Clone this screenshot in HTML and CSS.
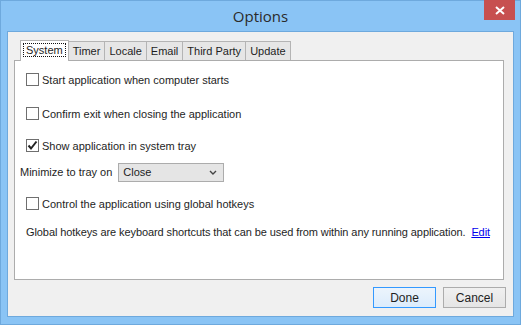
FILE: index.html
```html
<!DOCTYPE html>
<html lang="en">
<head>
  <meta charset="UTF-8">
  <title>Options</title>
  <link rel="stylesheet" href="styles.css">
</head>
<body>

<div class="window">
  <div class="titlebar">
    <span class="title">Options</span>
    <span class="close">
      <svg width="10" height="9" viewBox="0 0 10 9"><path d="M1 1 L9 8 M9 1 L1 8" stroke="#fff" stroke-width="2"/></svg>
    </span>
  </div>

  <div class="client">
    <div class="tabs">
      <div class="tab active"><span class="focus">System</span></div>
      <div class="tab">Timer</div>
      <div class="tab">Locale</div>
      <div class="tab">Email</div>
      <div class="tab">Third Party</div>
      <div class="tab">Update</div>
    </div>

    <div class="panel">
      <label class="row check"><span class="box"></span>Start application when computer starts</label>
      <label class="row check tight"><span class="box"></span>Confirm exit when closing the application</label>
      <label class="row check"><span class="box checked">
        <svg width="11" height="11" viewBox="0 0 11 11"><path d="M1.5 5.5 L4 8.5 L9.5 1.5" fill="none" stroke="#222" stroke-width="2"/></svg>
      </span>Show application in system tray</label>
      <div class="row tray">
        <span>Minimize to tray on</span>
        <div class="select">
          <span>Close</span>
          <svg width="8" height="5" viewBox="0 0 8 5"><path d="M1 1 L4 4 L7 1" fill="none" stroke="#444" stroke-width="1.4"/></svg>
        </div>
      </div>
      <label class="row check"><span class="box"></span>Control the application using global hotkeys</label>
      <p class="note">Global hotkeys are keyboard shortcuts that can be used from within any running application. <a href="#">Edit</a></p>
    </div>

    <div class="buttons">
      <button class="default">Done</button>
      <button>Cancel</button>
    </div>
  </div>
</div>

</body>
</html>
```

FILE: styles.css
```css
body {
  margin: 0;
  font-family: "Liberation Sans", Arial, sans-serif;
  font-size: 11px;
  color: #1e1e1e;
}
.window {
  width: 521px;
  height: 325px;
  box-sizing: border-box;
  background: #8ac4f5;
  border: 1px solid #6ea9dd;
  display: flex;
  flex-direction: column;
}
.titlebar {
  height: 30px;
  position: relative;
  display: flex;
  justify-content: center;
  align-items: center;
}
.title {
  font-family: "Open Sans", sans-serif;
  font-size: 15px;
  color: #2a2a2a;
  margin-top: -1px;
}
.close {
  position: absolute;
  top: -1px;
  right: 5px;
  width: 31px;
  height: 20px;
  background: #c75050;
  display: flex;
  align-items: center;
  justify-content: center;
}
.client {
  flex: 1;
  margin: 0 6px 7px 6px;
  background: #f0f0f0;
  border: 1px solid #6ea9dd;
  display: flex;
  flex-direction: column;
  padding: 7px 9px 8px 6px;
}
.tabs {
  display: flex;
  align-items: flex-end;
  padding-left: 6px;
  height: 21px;
  position: relative;
  z-index: 1;
}
.tab {
  height: 18px;
  padding: 0 4px;
  border: 1px solid #b4b4b4;
  border-bottom: none;
  background: #e6e6e6;
  line-height: 19px;
  margin-left: -1px;
}
.tab.active {
  height: 20px;
  background: #fff;
  margin-left: 0;
  padding: 0 2px;
  margin-bottom: -1px;
  line-height: 19px;
}
.focus {
  border: 1px dotted #111;
  padding: 0 2px;
}
.panel {
  height: 210px;
  background: #fff;
  border: 1px solid #acacac;
  padding: 8px 11px 0 5px;
}
.row {
  display: flex;
  align-items: center;
}
.check {
  margin-left: 6px;
  height: 21px;
  margin-bottom: 13px;
}
.check.tight {
  margin-bottom: 11px;
}
.box {
  width: 11px;
  height: 11px;
  border: 1px solid #6f6f6f;
  margin-right: 3px;
  display: flex;
  align-items: center;
  justify-content: center;
}
.tray {
  margin: -7px 0 11px;
  height: 20px;
}
.select {
  margin-left: 6px;
  border: 1px solid #acacac;
  background: #e5e5e5;
  display: flex;
  align-items: center;
  justify-content: space-between;
  padding: 0 6px 0 4px;
  box-sizing: border-box;
  width: 106px;
  height: 19px;
}
.note {
  margin: -1px 0 0 6px;
  white-space: nowrap;
  letter-spacing: -0.09px;
}
.note a {
  color: #0000ee;
  margin-left: 3px;
}
.buttons {
  margin-top: auto;
  display: flex;
  justify-content: flex-end;
  gap: 7px;
  margin-right: -2px;
}
button {
  width: 63px;
  height: 21px;
  font-family: inherit;
  font-size: 12px;
  color: #1e1e1e;
  border: 1px solid #acacac;
  background: linear-gradient(#f0f0f0, #e5e5e5);
  padding: 0;
}
button.default {
  border-color: #3399ff;
  background: linear-gradient(#ecf4fc, #dcecfc);
}
```
